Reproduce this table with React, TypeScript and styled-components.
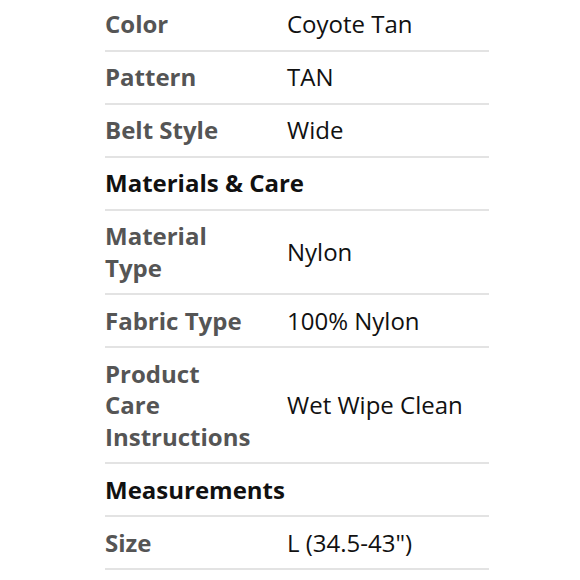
import React from "react";
import styled, { createGlobalStyle } from "styled-components";

const Global = createGlobalStyle`
  html, body { margin: 0; padding: 0; background: #ffffff; }
  body { font-family: "Open Sans", "Noto Sans", sans-serif; }
`;

const Page = styled.div`
  width: 580px;
  height: 580px;
  overflow: hidden;
  background: #fff;
`;

const Table = styled.div`
  margin: -1.5px 0 0 105px;
  width: 384px;
  display: flex;
  flex-direction: column;
`;

const Row = styled.div`
  display: grid;
  grid-template-columns: 182px 1fr;
  align-items: center;
  padding: 9.75px 0;
  border-bottom: 2px solid #e3e3e3;
  font-size: 24px;
  line-height: 31.5px;
`;

const Label = styled.div`
  font-weight: 700;
  color: #555555;
  max-width: 150px;
`;

const Value = styled.div`
  font-weight: 400;
  color: #111111;
`;

const Heading = styled.div`
  padding: 9.75px 0;
  border-bottom: 2px solid #e3e3e3;
  font-size: 24px;
  line-height: 31.5px;
  font-weight: 700;
  color: #111111;
`;

type Item = { kind: "row"; label: string; value: string } | { kind: "head"; title: string };

const items: Item[] = [
  { kind: "row", label: "Color", value: "Coyote Tan" },
  { kind: "row", label: "Pattern", value: "TAN" },
  { kind: "row", label: "Belt Style", value: "Wide" },
  { kind: "head", title: "Materials & Care" },
  { kind: "row", label: "Material Type", value: "Nylon" },
  { kind: "row", label: "Fabric Type", value: "100% Nylon" },
  { kind: "row", label: "Product Care Instructions", value: "Wet Wipe Clean" },
  { kind: "head", title: "Measurements" },
  { kind: "row", label: "Size", value: "L (34.5-43\")" },
];

export default function App() {
  return (
    <Page>
      <Global />
      <Table>
        {items.map((it, i) =>
          it.kind === "head" ? (
            <Heading key={i}>{it.title}</Heading>
          ) : (
            <Row key={i}>
              <Label>{it.label}</Label>
              <Value>{it.value}</Value>
            </Row>
          )
        )}
      </Table>
    </Page>
  );
}
